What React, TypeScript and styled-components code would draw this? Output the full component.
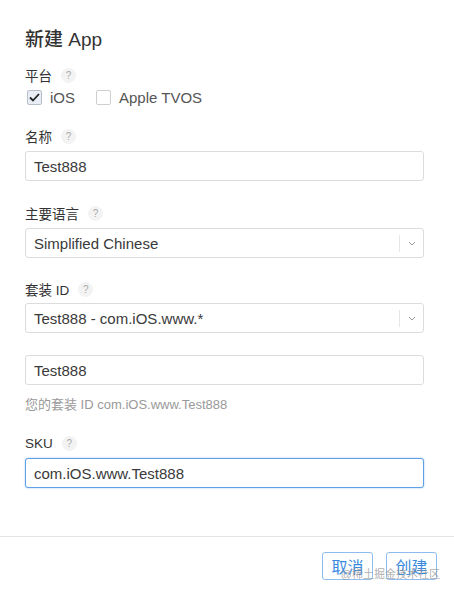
import React from 'react'
import styled, { createGlobalStyle } from 'styled-components'

const GlobalStyle = createGlobalStyle`
  html, body {
    margin: 0;
    padding: 0;
    background: #ffffff;
  }
  body {
    font-family: "Liberation Sans", "Noto Sans CJK SC", sans-serif;
    color: #333;
  }
`

const Dialog = styled.div`
  position: relative;
  width: 454px;
  height: 593px;
  display: flex;
  flex-direction: column;
  background: #fff;
  overflow: hidden;
`

const Body = styled.div`
  flex: 1;
  display: flex;
  flex-direction: column;
  padding: 28px 30px 0 25px;
`

const Title = styled.h1`
  margin: 0;
  font-size: 19px;
  line-height: 24px;
  font-weight: 500;
  color: #333;
`

const Field = styled.div<{ $top: number }>`
  display: flex;
  flex-direction: column;
  margin-top: ${(p) => p.$top}px;
`

const Label = styled.div<{ $gap?: number }>`
  display: flex;
  align-items: center;
  gap: 9px;
  height: 18px;
  font-size: 13.5px;
  color: #333;
  margin-bottom: ${(p) => p.$gap ?? 6}px;
`

const Help = styled.span`
  width: 15px;
  height: 15px;
  border-radius: 50%;
  background: #f3f3f3;
  color: #aaa;
  font-size: 10px;
  display: inline-flex;
  align-items: center;
  justify-content: center;
`

const CheckRow = styled.div`
  display: flex;
  align-items: center;
  height: 20px;
  gap: 21px;
  padding-left: 2px;
`

const CheckItem = styled.label`
  display: flex;
  align-items: center;
  gap: 8px;
  font-size: 15px;
  color: #555;
`

const Box = styled.span<{ $checked?: boolean }>`
  width: 13px;
  height: 13px;
  border: 1px solid ${(p) => (p.$checked ? '#b9bfca' : '#cfcfcf')};
  border-radius: 2px;
  background: ${(p) => (p.$checked ? '#e9edf5' : '#fff')};
  display: inline-flex;
  align-items: center;
  justify-content: center;
`

const Input = styled.div<{ $focus?: boolean }>`
  box-sizing: border-box;
  height: 30px;
  border: 1px solid ${(p) => (p.$focus ? '#5f9fe6' : '#dcdcdc')};
  box-shadow: ${(p) => (p.$focus ? '0 0 2px rgba(95,159,230,0.6)' : 'none')};
  border-radius: 3px;
  padding: 0 8px;
  display: flex;
  align-items: center;
  font-size: 15px;
  color: #3a3a3a;
  background: #fff;
`

const Select = styled(Input)`
  padding-right: 0;
`

const SelectText = styled.span`
  flex: 1;
`

const Caret = styled.span`
  width: 23px;
  height: 17px;
  border-left: 1px solid #e6e6e6;
  display: flex;
  align-items: center;
  justify-content: center;
`

const Hint = styled.div`
  margin-top: 11px;
  font-size: 13px;
  line-height: 18px;
  color: #999;
`

const Footer = styled.div`
  position: relative;
  border-top: 1px solid #e4e4e4;
  height: 57px;
  box-sizing: border-box;
  padding: 15px 17px 0 0;
  display: flex;
  justify-content: flex-end;
  gap: 13px;
`

const Button = styled.button`
  width: 51px;
  height: 28px;
  padding: 0;
  border: 1px solid #8fbcee;
  border-radius: 3px;
  background: #fff;
  color: #3b8ae0;
  font-family: "Liberation Sans", "Noto Sans CJK SC", sans-serif;
  font-size: 16px;
`

/* screenshot watermark, lies over the buttons */
const Watermark = styled.span`
  position: absolute;
  right: 14px;
  bottom: 12px;
  font-size: 11px;
  color: rgba(140, 140, 140, 0.7);
  pointer-events: none;
`

const Chevron = () => (
  <svg width="8" height="5" viewBox="0 0 8 5">
    <path d="M1 1 L4 4 L7 1" fill="none" stroke="#999" strokeWidth="1" />
  </svg>
)

const Check = () => (
  <svg width="11" height="9" viewBox="0 0 11 9">
    <path d="M1 4.5 L4 7.5 L10 1" fill="none" stroke="#222" strokeWidth="1.8" />
  </svg>
)

const App: React.FC = () => {
  return (
    <>
      <GlobalStyle />
      <Dialog>
        <Body>
          <Title>新建 App</Title>

          <Field $top={14}>
            <Label $gap={3}>
              平台 <Help>?</Help>
            </Label>
            <CheckRow>
              <CheckItem>
                <Box $checked>
                  <Check />
                </Box>
                iOS
              </CheckItem>
              <CheckItem>
                <Box />
                Apple TVOS
              </CheckItem>
            </CheckRow>
          </Field>

          <Field $top={20}>
            <Label>
              名称 <Help>?</Help>
            </Label>
            <Input>Test888</Input>
          </Field>

          <Field $top={23}>
            <Label>
              主要语言 <Help>?</Help>
            </Label>
            <Select>
              <SelectText>Simplified Chinese</SelectText>
              <Caret>
                <Chevron />
              </Caret>
            </Select>
          </Field>

          <Field $top={22}>
            <Label $gap={5}>
              套装 ID <Help>?</Help>
            </Label>
            <Select>
              <SelectText>Test888 - com.iOS.www.*</SelectText>
              <Caret>
                <Chevron />
              </Caret>
            </Select>
          </Field>

          <Field $top={22}>
            <Input>Test888</Input>
            <Hint>您的套装 ID com.iOS.www.Test888</Hint>
          </Field>

          <Field $top={20}>
            <Label>
              SKU <Help>?</Help>
            </Label>
            <Input $focus>com.iOS.www.Test888</Input>
          </Field>
        </Body>

        <Footer>
          <Button>取消</Button>
          <Button>创建</Button>
          <Watermark>@稀土掘金技术社区</Watermark>
        </Footer>
      </Dialog>
    </>
  )
}

export default App
